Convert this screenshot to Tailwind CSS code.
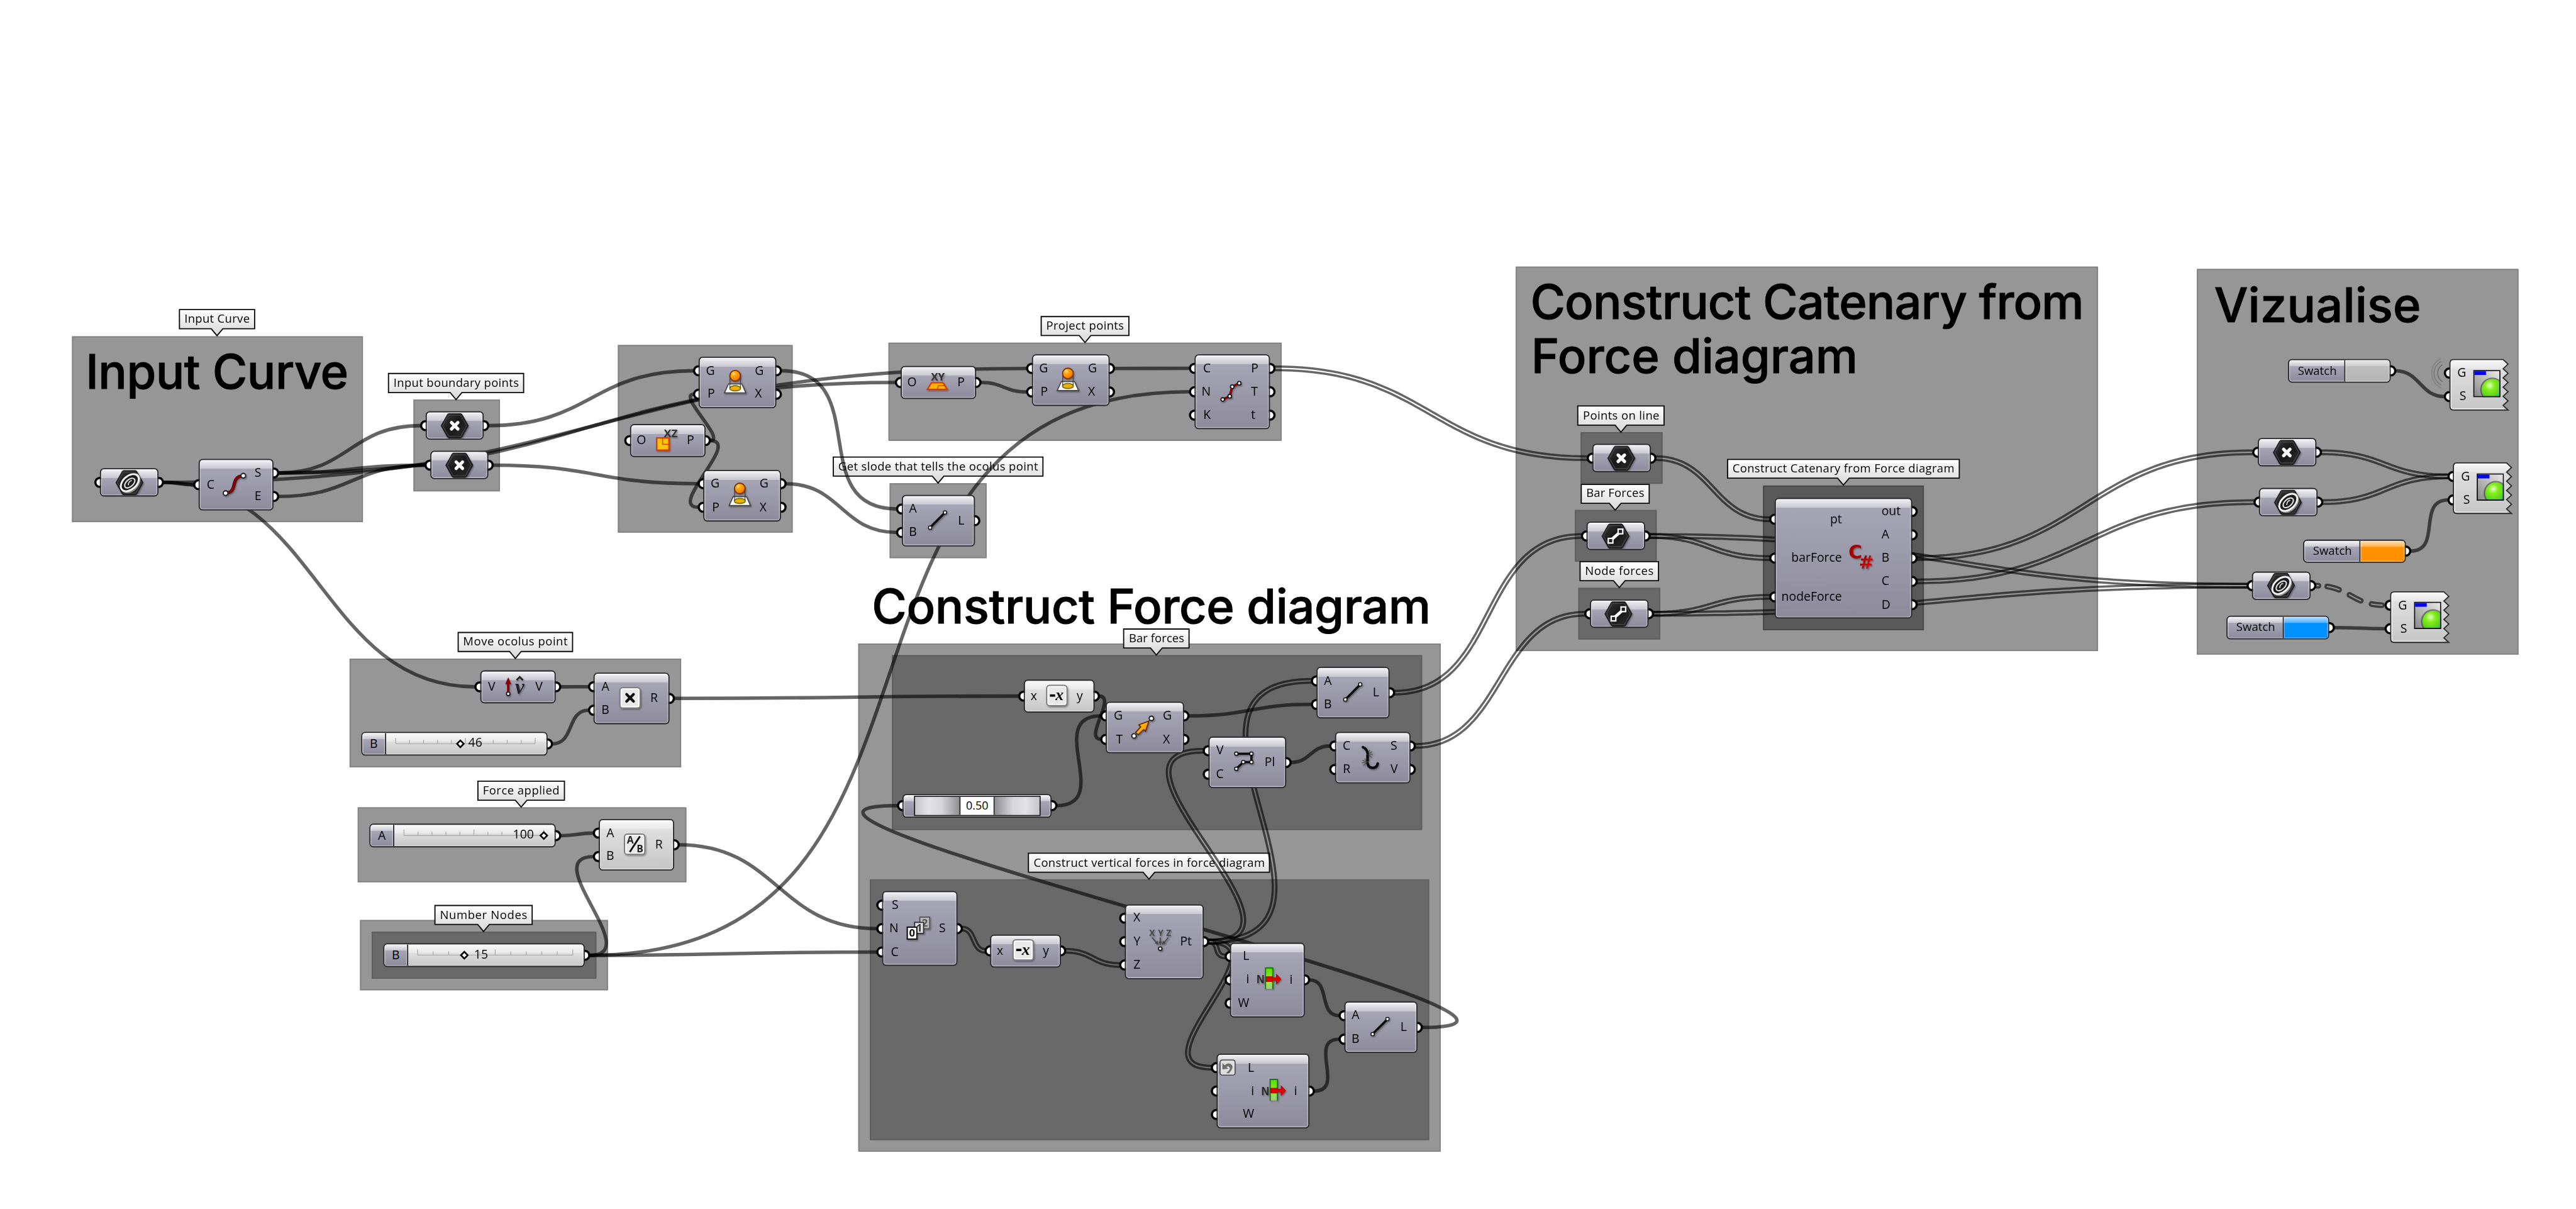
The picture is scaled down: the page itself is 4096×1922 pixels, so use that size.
<!DOCTYPE html>
<html lang="en">
<head>
<meta charset="utf-8">
<title>Catenary definition</title>
<script src="https://cdn.jsdelivr.net/npm/@tailwindcss/browser@4"></script>
</head>
<body class="bg-white overflow-hidden">
<div class="w-[4096px] h-[1922px] overflow-hidden relative bg-white">
  <main id="canvas" class="relative w-[4436px] h-[2082px] origin-top-left scale-[0.92335] font-['Open_Sans','Noto_Sans',sans-serif] text-black"></main>
</div>

<svg class="absolute w-0 h-0" width="0" height="0">
  <defs>
    <linearGradient id="gHex" x1="0" y1="0" x2="1" y2="1"><stop offset="0" stop-color="#3c3c3c"/><stop offset=".45" stop-color="#191919"/><stop offset="1" stop-color="#2b2b2b"/></linearGradient>
    <linearGradient id="gPaper" x1="0" y1="0" x2="0" y2="1"><stop offset="0" stop-color="#ffffff"/><stop offset="1" stop-color="#d6d6d6"/></linearGradient>
    <linearGradient id="gBody" x1="0" y1="0" x2="0" y2="1"><stop offset="0" stop-color="#f8f8f8"/><stop offset=".18" stop-color="#e6e6e6"/><stop offset=".19" stop-color="#dedede"/><stop offset="1" stop-color="#c6c6c6"/></linearGradient>
    <radialGradient id="gBall" cx=".36" cy=".3" r=".72"><stop offset="0" stop-color="#ffe9a0"/><stop offset=".28" stop-color="#ffa90a"/><stop offset=".7" stop-color="#ff8c00"/><stop offset="1" stop-color="#d86000"/></radialGradient>
    <radialGradient id="gSphere" cx=".38" cy=".3" r=".72"><stop offset="0" stop-color="#e6ffd0"/><stop offset=".3" stop-color="#86ee1c"/><stop offset=".7" stop-color="#5bd41c"/><stop offset=".88" stop-color="#18c48c"/><stop offset="1" stop-color="#1d7fd8"/></radialGradient>
    <linearGradient id="gFrame" x1="0" y1="1" x2="1" y2="0"><stop offset="0" stop-color="#858585"/><stop offset=".6" stop-color="#c4c4c4"/><stop offset="1" stop-color="#ececec"/></linearGradient>
    <linearGradient id="gGreen" x1="0" y1="0" x2="0" y2="1"><stop offset="0" stop-color="#5fd800"/><stop offset=".6" stop-color="#8df028"/><stop offset="1" stop-color="#b6f56e" stop-opacity=".5"/></linearGradient>
    <linearGradient id="gRed" x1="0" y1="0" x2="1" y2="1"><stop offset="0" stop-color="#7c0000"/><stop offset="1" stop-color="#f01010"/></linearGradient>
    <linearGradient id="gArrow" x1="0" y1="0" x2="1" y2="1"><stop offset="0" stop-color="#ffd000"/><stop offset="1" stop-color="#f08a00"/></linearGradient>
    <filter id="soft" x="-30%" y="-30%" width="170%" height="170%"><feDropShadow dx="1.5" dy="2" stdDeviation="1.3" flood-color="#000" flood-opacity=".35"/></filter>
  </defs>
</svg>

<script>
// ---------- icons, drawn in a 48 x 48 box ----------
const dot = (x, y, r = 3.4, s = 2) => `<circle cx="${x}" cy="${y}" r="${r}" fill="#fff" stroke="#1a1a1a" stroke-width="${s}"/>`;
const sq = (x, y) => `<rect x="${x - 2.7}" y="${y - 2.7}" width="5.4" height="5.4" rx="1.5" fill="#fff" stroke="#111" stroke-width="1.7"/>`;
const hex = inner => `<path d="M.5 24L11.5 4.5Q12.3 3 14 3H34Q35.7 3 36.5 4.5L47.5 24L36.5 43.5Q35.7 45 34 45H14Q12.3 45 11.5 43.5Z" fill="url(#gHex)" stroke="#111" stroke-width="1"/><path d="M3.5 24L13.5 6H34.5L44.5 24L34.5 42H13.5Z" fill="none" stroke="#4a4a4a" stroke-width="1.2"/>${inner}`;
const keycap = inner => `<rect x="6.5" y="5" width="35" height="35" rx="5" fill="#e9e9e9" stroke="#7c7c7c" stroke-width="2.2"/><rect x="8.7" y="7.2" width="30.6" height="30.6" rx="3" fill="none" stroke="#fff" stroke-width="1.6"/>${inner}`;
const T = (x, y, size, txt, extra = '') => `<text x="${x}" y="${y}" font-size="${size}" text-anchor="middle" ${extra}>${txt}</text>`;
const OS = `font-family="Open Sans" font-weight="700"`, LS = `font-family="Liberation Sans" font-weight="700"`;
const rings = `<g transform="translate(24.500 24) rotate(-42)" fill="none"><path d="M-18 3Q-14 15 2 14Q20 11 19 -3" stroke="#8f8f8f" stroke-width="3"/><ellipse rx="18" ry="11.5" stroke="#f4f4f4" stroke-width="3.2"/><ellipse cx="-.5" cy=".5" rx="10.5" ry="6" stroke="#dedede" stroke-width="2.3"/><path d="M-5 1.5Q0 -3.500 5 -.5" stroke="#cfcfcf" stroke-width="2"/></g>`;
const ICONS = {
  curve: hex(rings),
  point: hex(`<path d="M18.500 18.500L29.500 29.500M29.500 18.500L18.500 29.500" stroke="#fff" stroke-width="5.600" stroke-linecap="round"/>`),
  line2: hex(`<path d="M16 31L32 17" stroke="#fff" stroke-width="5"/><rect x="11.500" y="28" width="8" height="8" fill="#222" stroke="#fff" stroke-width="2.400"/><rect x="28.500" y="12" width="8" height="8" fill="#222" stroke="#fff" stroke-width="2.400"/>`),
  ends: `<path d="M8.500 38C32 36 14 10 39 8" fill="none" stroke="#2a0000" stroke-width="5.400"/><path d="M8.500 38C32 36 14 10 39 8" fill="none" stroke="#900000" stroke-width="3.600"/>${dot(8.500, 38, 4)}${dot(39, 8, 4)}`,
  project: `<path d="M12.500 26H35.500L42.500 41.500H5.500Z" fill="#fff" stroke="#4a4a4a" stroke-width="2"/><ellipse cx="24" cy="33.500" rx="9.500" ry="4.400" fill="#e8b400" stroke="#7d6900" stroke-width="1.800"/><path d="M15 14V33M33 14V33" stroke="#333" stroke-width="1.200"/><circle cx="24" cy="12" r="9.200" fill="url(#gBall)" stroke="#7a3000" stroke-width="2"/>`,
  xz: `${T(31, 17.500, 18, 'XZ', OS + ' fill="#333" textLength="24" lengthAdjust="spacingAndGlyphs"')}<rect x="7" y="19" width="21" height="21" fill="#ffc20a" stroke="#d43a00" stroke-width="2.400"/><path d="M17 19V30H28" fill="none" stroke="#d43a00" stroke-width="1.500"/>`,
  xy: `${T(25, 20.500, 18, 'XY', OS + ' fill="#333" textLength="24" lengthAdjust="spacingAndGlyphs"')}<path d="M14 24H34L41 35.500H7Z" fill="#ffb300" stroke="#d43a00" stroke-width="2.400"/><path d="M24 35L26 29H37" fill="none" stroke="#d43a00" stroke-width="1.500"/>`,
  divide: `<path d="M9.600 36.800L21.700 31.200L26 14.800L38 8.800" fill="none" stroke="#8e0000" stroke-width="4.200"/>${dot(9.600, 36.800, 3.100)}${dot(21.700, 31.200, 3.100)}${dot(26, 14.800, 3.100)}${dot(38, 8.800, 3.100)}`,
  line: `<path d="M12 35L37 10" stroke="#0c0c0c" stroke-width="4"/>${sq(11.7, 35.4)}${sq(37.3, 9.4)}`,
  unit: `<path d="M12.200 33V15" stroke="#8b0000" stroke-width="4"/><path d="M12.200 7L17.500 19H7Z" fill="#8b0000"/>${dot(12.200, 35.500, 3)}${T(32, 36, 36, 'v', 'font-family="Liberation Serif" font-weight="700" font-style="italic" fill="#222"')}<path d="M26.500 12L32 6.500L37.500 12" fill="none" stroke="#222" stroke-width="3"/>`,
  mult: keycap(`<path d="M18 16.500L30 28.500M30 16.500L18 28.500" stroke="#0a0a0a" stroke-width="4.600" stroke-linecap="round"/>`),
  div: keycap(`${T(16.500, 21.500, 17, 'A', OS + ' fill="#222"')}${T(33, 37, 17, 'B', OS + ' fill="#222"')}<path d="M33 9L15.500 36" stroke="#111" stroke-width="3"/>`),
  neg: keycap(`${T(28.500, 30.500, 28, 'x', 'font-family="Liberation Serif" font-weight="700" font-style="italic"')}<path d="M12 22.500H21" stroke="#000" stroke-width="4"/>`),
  move: `<path d="M11.500 32L20.500 22.500L17 19L34.500 12.500L28.500 30L25.500 27L16 36Z" fill="url(#gArrow)" stroke="#5a1c00" stroke-width="1.700"/>${dot(8.800, 38, 3.800)}${dot(38.800, 7.800, 3.800)}`,
  poly: `<path d="M11 8.600H37V23H23L11 34.600" fill="none" stroke="#0c0c0c" stroke-width="3.800"/>${sq(11, 8.600)}${sq(37, 8.600)}${sq(37, 23)}${sq(23, 23)}${sq(11, 34.600)}`,
  shatter: `<g stroke="#555" stroke-width="1.500"><path d="M19 17L27 13M19 17L28 18M19 17L26 23M19 17L23 10"/><path d="M18 31L10 28M18 31L9 32.500M18 31L12 37M18 31L14 25"/></g><path d="M11 5.500Q18 8 19 16" fill="none" stroke="#0a0a0a" stroke-width="4.400" stroke-linecap="round"/><path d="M19 18V30" stroke="#0a0a0a" stroke-width="4.400"/><path d="M19 33Q20 41 28 41Q35 41 36.500 33.500" fill="none" stroke="#0a0a0a" stroke-width="4.400" stroke-linecap="round"/>`,
  series: `<rect x="26" y="4" width="17" height="20" fill="#b9b9b9" stroke="#555" stroke-width="2"/>${T(34.500, 20.500, 18, '2', OS + ' fill="#555"')}<rect x="17" y="13" width="15.500" height="19" fill="#ddd" stroke="#333" stroke-width="2"/>${T(25, 29, 18, '1', OS + ' fill="#333"')}<rect x="4.400" y="21.300" width="16.500" height="20.500" fill="#fff" stroke="#111" stroke-width="2.200"/>${T(12.700, 38, 18, '0', OS + ' fill="#111"')}`,
  xyz: `${T(24, 14, 15, 'XYZ', OS + ' fill="#4a4a4a" textLength="38"')}<g stroke="#4a4a4a" stroke-width="2" fill="#4a4a4a"><path d="M10 17L18.500 27M24 17V26M38 17L29.500 27"/><path stroke="none" d="M21 30L14.500 27L19.500 22.500ZM24 31L21 24H27ZM27 30L28.500 22.500L33.500 27Z"/></g>${dot(24, 36.300, 3)}`,
  list: `${T(8.800, 30, 19, 'N', LS + ' fill="#2c2c2c"')}<rect x="17" y="3.500" width="13" height="36" fill="url(#gGreen)"/><path d="M17.300 40V3.500H29.800V40" fill="none" stroke="#0c7a10" stroke-width="2"/><path d="M18.300 18.500H29.500V20.200H36V14L44 22.700L36 31.500V25.200H29.500V27H18.300Z" fill="#e00000" stroke="#900" stroke-width=".8"/>`,
  csharp: `${T(13, 25, 32, 'C', 'font-family="DejaVu Sans" font-weight="700" fill="#a40000"')}${T(32, 42.500, 31, '#', 'font-family="DejaVu Sans" font-weight="700" fill="url(#gRed)"')}`,
  preview: `<svg x="1" y="-2" width="47" height="47" viewBox="0 0 47 47"><rect width="47" height="47" fill="url(#gFrame)"/><circle cx="33" cy="34" r="21" fill="#222" opacity=".5"/><circle cx="33" cy="34" r="18.500" fill="url(#gSphere)"/><rect x="1" y="1" width="45" height="45" fill="none" stroke="#111" stroke-width="2"/><rect x="2" y="2.200" width="20" height="6.500" fill="#0606f4"/></svg>`,
};
const icon = n => `<svg class="size-12 shrink-0 overflow-visible" viewBox="0 0 48 48"><g${n === 'preview' ? '' : ' filter="url(#soft)"'}>${ICONS[n]}</g></svg>`;

// ---------- data: canvas coordinates ----------
const groups = [
  [124, 579, 625, 899], [712, 688, 861, 846], [1064, 594, 1365, 917], [1530, 590, 2207, 759], [1532, 832, 1699, 961],
  [602, 1134, 1173, 1321], [616, 1390, 1182, 1519], [620, 1584, 1047, 1705], [1478, 1108, 2481, 1983],
  [2610, 459, 3613, 1121], [3783, 463, 4337, 1127],
  [640, 1604, 1027, 1685, 1], [1536, 1128, 2449, 1429, 1], [1498, 1514, 2461, 1963, 1],
  [2722, 744, 2863, 833, 1], [2712, 878, 2853, 967, 1], [2718, 1012, 2859, 1101, 1], [3036, 836, 3313, 1085, 2],
];
const titles = [
  ['Input Curve', 152.5, 595, 670], ['Construct Force diagram', 1506.4, 2459, 1074.3],
  ['Construct Catenary from', 2640.4, 3583.7, 550], ['Force diagram', 2642, 3194.3, 643], ['Vizualise', 3818, 4164, 554.5],
];
const balloons = [
  ['Input Curve', 308, 532, 439.5, 567], ['Input boundary points', 668.3, 642, 903, 677], ['Project points', 1792, 544.3, 1945, 579],
  ['Get slode that tells the ocolus point', 1434, 786.3, 1797, 821], ['Move ocolus point', 788, 1088, 987, 1122.7],
  ['Force applied', 822, 1344.3, 973, 1379], ['Number Nodes', 748, 1558.3, 917.4, 1593], ['Bar forces', 1934.4, 1082.3, 2049, 1117],
  ['Construct vertical forces in force diagram', 1770.4, 1468.3, 2187.5, 1503], ['Points on line', 2716.4, 698, 2867, 733],
  ['Bar Forces', 2722, 832.5, 2841, 867], ['Node forces', 2720, 966.3, 2857, 1001], ['Construct Catenary from Force diagram', 2974, 790.4, 3375, 824.6],
];
// id: [x, y, w, h, inputs, outputs, icon, left label edge, right label edge, light]
// slider: [..., 'slider', letter, letter width, track start, track length, knob, value, value x]
const N = {
  n1: [172, 806, 101, 49, [''], [''], 'curve', 0, 101],
  n2: [342.3, 790, 129, 89, ['C'], ['S', 'E'], 'ends', 27, 96],
  n3: [733, 708.3, 100, 49, [''], [''], 'point', 0, 100],
  n4: [740.6, 776.3, 100, 49, [''], [''], 'point', 0, 100],
  n5: [1203, 614, 134, 89, ['G', 'P'], ['G', 'X'], 'project', 28, 97],
  n6: [1084.6, 730, 130, 57, ['O'], ['P'], 'xz', 28, 98],
  n7: [1211, 808.5, 134, 89, ['G', 'P'], ['G', 'X'], 'project', 28, 97],
  n8: [1550.6, 630, 130, 57, ['O'], ['P'], 'xy', 28, 98],
  n9: [1776.6, 610, 134, 89, ['G', 'P'], ['G', 'X'], 'project', 28, 97],
  n10: [2057, 610, 130, 129, ['C', 'N', 'K'], ['P', 'T', 't'], 'divide', 28, 97.5],
  n11: [1552.7, 852, 126, 89, ['A', 'B'], ['L'], 'line', 26, 97],
  n12: [826.5, 1154, 130.5, 57, ['V'], ['V'], 'unit', 26.4, 95.3],
  n13: [1022.2, 1158, 130.5, 89, ['A', 'B'], ['R'], 'mult', 27, 97.7],
  n14: [1030.5, 1410, 130.5, 89, ['A', 'B'], ['R'], 'div', 27, 97.7, 1],
  n15: [1763, 1170, 121.5, 57, ['x'], ['y'], 'neg', 22.8, 91, 1],
  n16: [1904.3, 1208.3, 134.5, 89, ['G', 'T'], ['G', 'X'], 'move', 29, 98.2],
  n17: [2267, 1148, 126, 89, ['A', 'B'], ['L'], 'line', 26.4, 97],
  n18: [2080.7, 1268.3, 134, 89, ['V', 'C'], ['Pl'], 'poly', 26.5, 97],
  n19: [2298.6, 1260, 130, 89, ['C', 'R'], ['S', 'V'], 'shatter', 27, 96],
  n20: [1518.6, 1534.3, 130, 129, ['S', 'N', 'C'], ['S'], 'series', 28.6, 98.3],
  n21: [1705, 1608.5, 121.5, 57, ['x'], ['y'], 'neg', 22.5, 91],
  n22: [1936.8, 1556.6, 136, 129, ['X', 'Y', 'Z'], ['Pt'], 'xyz', 27, 95.4],
  n23: [2118.4, 1622.5, 128.2, 129, ['L', 'i', 'W'], ['i'], 'list', 33, 102.4],
  n24: [2094.7, 1814, 160, 129, ['L', 'i', 'W'], ['i'], 'list', 65, 134],
  n25: [2314.7, 1724.4, 126, 89, ['A', 'B'], ['L'], 'line', 26.4, 97],
  n26: [2742, 764.3, 101, 49, [''], [''], 'point', 0, 99],
  n27: [2732, 898.3, 101, 49, [''], [''], 'line2', 0, 99],
  n28: [2737.8, 1032.2, 101, 49, [''], [''], 'line2', 0, 99],
  n29: [3056.3, 856.6, 236.5, 208.5, ['pt', 'barForce', 'nodeForce'], ['out', 'A', 'B', 'C', 'D'], 'csharp', 115.5, 183.7],
  n31: [3888, 754.2, 101, 49, [''], [''], 'point', 0, 100],
  n32: [3890.3, 840, 101, 49, [''], [''], 'curve', 0, 100],
  n34: [3878.3, 983.8, 101, 49, [''], [''], 'curve', 0, 100],
  p1: [4218, 618, 101, 89, ['G', 'S'], [], 'preview', 29, 98],
  p2: [4224.3, 796, 101, 89, ['G', 'S'], [], 'preview', 29, 98],
  p3: [4116, 1017.8, 101, 89, ['G', 'S'], [], 'preview', 29, 98],
  s1: [622.4, 1260.3, 320.3, 41, [], [''], 'slider', 'B', 40.4, 59.3, 240.3, 170.8, '46', 185],
  s2: [636.3, 1418.3, 320.7, 41, [], [''], 'slider', 'A', 40.4, 59.7, 240.8, 240.5 + 60, '100', 248],
  s3: [660.4, 1624.3, 346.6, 41, [], [''], 'slider', 'B', 40.4, 59.3, 267, 139.6, '15', 157],
  v1: [1554.3, 1366.5, 257, 41, [''], [''], 'fader'],
  w1: [3940, 618.3, 177, 40.5, [], [''], 'swatch', 'grey', 97],
  w2: [3966.3, 928.5, 176.5, 40.5, [], [''], 'swatch', 'orange', 96.6],
  w3: [3834.3, 1060.2, 177, 40.5, [], [''], 'swatch', 'blue', 96.4],
};
// from, out index, to, in index, kind (1 item, 2 list, 3 tree), handle length
const wires = [
  ['n1', 0, 'n2', 0, 1], ['n1', 0, 'n12', 0, 1, 265], ['n1', 0, 'n9', 0, 1], ['n2', 0, 'n3', 0, 1], ['n2', 0, 'n8', 0, 1], ['n2', 0, 'n4', 0, 1], ['n2', 1, 'n4', 0, 1],
  ['n3', 0, 'n5', 0, 1], ['n4', 0, 'n7', 0, 1], ['n6', 0, 'n5', 1, 1, 30], ['n6', 0, 'n7', 1, 1, 56],
  ['n5', 0, 'n11', 0, 1], ['n7', 0, 'n11', 1, 1], ['n8', 0, 'n9', 1, 1], ['n9', 0, 'n10', 0, 1], ['s3', 0, 'n10', 1, 1, 705], ['n10', 0, 'n26', 0, 2],
  ['n12', 0, 'n13', 0, 1], ['s1', 0, 'n13', 1, 1], ['n13', 0, 'n15', 0, 1], ['s2', 0, 'n14', 0, 1], ['s3', 0, 'n14', 1, 1, 98], ['s3', 0, 'n20', 2, 1], ['n14', 0, 'n20', 1, 1],
  ['n15', 0, 'n16', 1, 1, 32], ['v1', 0, 'n16', 0, 1, 100], ['n16', 0, 'n17', 1, 1], ['n22', 0, 'n17', 0, 2, 300], ['n22', 0, 'n18', 0, 2, 212], ['n22', 0, 'n23', 0, 2, 22], ['n22', 0, 'n24', 0, 2, 140],
  ['n18', 0, 'n19', 0, 1], ['n17', 0, 'n27', 0, 2], ['n19', 0, 'n28', 0, 2], ['n20', 0, 'n21', 0, 2, 24], ['n21', 0, 'n22', 2, 2],
  ['n23', 0, 'n25', 0, 1, 38], ['n24', 0, 'n25', 1, 1, 56], ['n25', 0, 'v1', 0, 1, 395],
  ['n26', 0, 'n29', 0, 2], ['n27', 0, 'n29', 1, 2], ['n27', 0, 'n34', 0, 2], ['n28', 0, 'n29', 2, 2], ['n28', 0, 'n34', 0, 2],
  ['n29', 2, 'n31', 0, 2], ['n29', 3, 'n32', 0, 2], ['n31', 0, 'p2', 0, 2], ['n32', 0, 'p2', 0, 2], ['w2', 0, 'p2', 1, 1, 56], ['w1', 0, 'p1', 1, 1], ['n34', 0, 'p3', 0, 3], ['w3', 0, 'p3', 1, 1],
];

// ---------- geometry ----------
const portY = (n, list, i) => n[1] + 4 + (n[3] - 8) * (i + .5) / list.length;
const outP = (id, i) => { const n = N[id]; return [n[0] + n[2], portY(n, n[5], i)]; };
const inP = (id, i) => { const n = N[id]; return [n[0], portY(n, n[4], i)]; };
const f = v => v.toFixed(1);
function wire([a, ai, b, bi, kind, d]) {
  let [x0, y0] = outP(a, ai), [x3, y3] = inP(b, bi);
  x0 += 8; x3 -= 8;
  d = d ?? Math.max((x3 - x0) / 2, Math.abs(y3 - y0) * .68);
  if (kind === 1) return `<path d="M${f(x0)} ${f(y0)}C${f(x0 + d)} ${f(y0)} ${f(x3 - d)} ${f(y3)} ${f(x3)} ${f(y3)}" stroke-width="6"/>`;
  const at = (t, o) => {
    const u = 1 - t, x1 = x0 + d, x2 = x3 - d;
    const x = u*u*u*x0 + 3*u*u*t*x1 + 3*u*t*t*x2 + t*t*t*x3, y = u*u*u*y0 + 3*u*u*t*y0 + 3*u*t*t*y3 + t*t*t*y3;
    const dx = 3*u*u*(x1-x0) + 6*u*t*(x2-x1) + 3*t*t*(x3-x2), dy = 6*u*t*(y3-y0), l = Math.hypot(dx, dy) || 1;
    return f(x - dy / l * o) + ' ' + f(y + dx / l * o);
  };
  const side = (t0, t1, o) => Array.from({ length: 81 }, (_, i) => at(t0 + (t1 - t0) * i / 80, o)).join('L');
  if (kind === 2) return `<path d="M${side(0, 1, 3.1)}M${side(0, 1, -3.1)}" stroke-width="3.8"/>`;
  return [[0, .03], [.125, .295], [.48, .69], [.845, .965]].map(([s, e]) => `<path d="M${side(s, e, 3)}A3 3 0 0 0 ${at(e, -3)}L${side(e, s, -3)}A3 3 0 0 0 ${at(s, 3)}Z" stroke-width="3.8"/>`).join('');
}
const box = (x, y, w, h) => `left:${x}px;top:${y}px;width:${w}px;height:${h}px`;

// ---------- rendering ----------
const groupTone = ['bg-[#969696] border-[#828282]', 'bg-[#696969] border-[#5e5e5e]', 'bg-[#595959] border-[#474747]'];
const frame = 'absolute flex rounded-[7px] border-2 border-[#2b2b2f] overflow-hidden shadow-[inset_0_0_0_1.5px_rgba(255,255,255,0.45)]';
const tone = 'bg-[linear-gradient(to_bottom,#f6f6f8_0px,#e3e2e7_5px,#c9c8d1_15px,#a6a5b5_15px,#8d8b9b_100%)]';
const toneSmall = 'bg-[linear-gradient(to_bottom,#f6f6f8_0px,#c9c8d1_10px,#a6a5b5_11px,#8d8b9b_100%)]';
const toneLight = 'bg-[linear-gradient(to_bottom,#fafafa_0px,#e8e8e8_15px,#dfdfdf_15px,#c6c6c6_100%)]';
const swatchTone = {
  grey: 'bg-[linear-gradient(to_bottom,#e8e8e8_0px,#cfcfcf_10px,#bdbdbd_11px,#b4b4b4_100%)]',
  orange: 'bg-[linear-gradient(to_bottom,#ffe2b8_0px,#ffb650_10px,#ff9300_11px,#ff9000_100%)]',
  blue: 'bg-[linear-gradient(to_bottom,#b8dfff_0px,#55b4ff_10px,#0092ff_11px,#008fff_100%)]',
};
const column = (list, cls, w = '') => `<div class="flex flex-col h-full py-0.5 ${cls}"${w && ` style="width:${w}px"`}>${list.map(l => `<span class="flex-1 flex items-center pb-0.5">${l}</span>`).join('')}</div>`;

function node(id) {
  const n = N[id], [x, y, w, h, ins, outs, kind] = n;
  if (kind === 'slider') {
    const [, , , , , , , label, div, t0, len, knob, value, vx] = n;
    let ticks = `M${t0} 20.500H${t0 + len}`;
    for (let i = 0; i <= 10; i++) ticks += `M${(t0 + len * i / 10).toFixed(1)} 20.500V${i % 5 ? 14 : 10.5}`;
    return `<div class="${frame} ${toneLight}" style="${box(x, y, w, h)}">
      <div class="h-full flex items-center justify-center border-r-2 border-[#2b2b2f] text-[21px] leading-none ${toneSmall} shadow-[inset_0_0_0_1.5px_rgba(255,255,255,0.4)]" style="width:${div}px">${label}</div>
      <svg class="absolute -left-0.5 -top-0.5 w-full h-full overflow-visible"><path d="${ticks}" stroke="#aaa" stroke-width="1.4" fill="none"/><path d="M${knob} 14.800L${knob + 5.8} 20.600L${knob} 26.400L${knob - 5.8} 20.600Z" fill="#fff" stroke="#000" stroke-width="2.8"/></svg>
      <span class="absolute -top-0.5 text-[21px] font-medium leading-[37px]" style="left:${vx - 3}px">${value}</span></div>`;
  }
  if (kind === 'fader') return `<div class="${frame} ${toneSmall} items-center justify-center" style="${box(x, y, w, h)}">
      <div class="flex w-[218px] h-[35px] border-2 border-[#1b1b1b] items-stretch"><div class="flex-1 bg-[linear-gradient(to_right,#c4c4ca,#e2e2e6_30%,#d6d6da_60%,#8e8e94)]"></div><div class="w-[61px] border-x-2 border-[#1b1b1b] bg-white flex items-center justify-center text-[19.5px] leading-none">0.50</div><div class="flex-1 bg-[linear-gradient(to_left,#c4c4ca,#e2e2e6_30%,#d6d6da_60%,#8e8e94)]"></div></div></div>`;
  if (kind === 'swatch') return `<div class="${frame} ${toneSmall}" style="${box(x, y, w, h)}">
      <div class="h-full flex items-center justify-center border-r-2 border-[#2b2b2f] text-[20px] leading-none pb-0.5 pl-0.5" style="width:${n[8]}px"><span data-fit="67">Swatch</span></div><div class="flex-1 ${swatchTone[n[7]]} shadow-[inset_0_0_0_1.5px_rgba(255,255,255,0.35)]"></div></div>`;
  // b is the frame's border width
  const inner = b => `${ins[0] ? column(ins, 'items-end text-right', n[7] - b) : ''}
      <div class="flex items-center justify-center" style="width:${n[8] - n[7] - (ins[0] ? 0 : 2 * b)}px">${icon(kind)}</div>${outs[0] ? column(outs, 'items-start') : ''}`;
  if (kind === 'preview') {
    let z = 'M6 1H92.500';
    for (let i = 1; i <= 11; i++) z += `L${i % 2 ? 101 : 92.5} ${(1 + i * 7.91).toFixed(1)}`;
    return `<div class="absolute flex text-[21px] leading-none" style="${box(x, y, w, h)}"><svg class="absolute inset-0 w-full h-full overflow-visible"><path d="${z}H7Q1 88 1 82V7Q1 1 7 1Z" fill="url(#gBody)" stroke="#2b2b2f" stroke-width="2"/><path d="M92 3H7Q3 3 3 7V82Q3 86 7 86H94" fill="none" stroke="#fff" stroke-opacity=".7" stroke-width="1.5"/></svg><div class="relative flex w-full h-full py-0.5">${inner(0)}</div></div>`;
  }
  const extra = id === 'n24' ? `<svg class="absolute left-[3px] top-2 w-7 h-7" viewBox="0 0 28 28"><rect x="1" y="1" width="26" height="26" rx="4" fill="#dedede" stroke="#333" stroke-width="1.6"/><path d="M5 17V6L9 10Q14 5 19.500 8Q25 12 20.500 18.500L16.500 24L11.500 23.500Q19.500 18 17.500 14Q15.500 10.500 12 13L15.500 16Z" fill="#6e6e6e"/></svg>` : '';
  return `<div class="${frame} ${n[9] ? toneLight : tone} text-[21px] leading-none" style="${box(x, y, w, h)}">${inner(2)}${extra}</div>`;
}

function balloon([text, x0, y0, x1, y1]) {
  const w = x1 - x0, h = y1 - y0, m = w / 2;
  return `<div class="absolute flex items-center justify-center text-[20px] leading-none" style="${box(x0, y0, w, h)}">
    <svg class="absolute inset-0 w-full h-full overflow-visible"><path d="M1 1H${w - 1}V${h - 1}H${m + 10}L${m} ${h + 11}L${m - 10} ${h - 1}H1Z" fill="url(#gPaper)" stroke="#0a0a0a" stroke-width="2"/></svg>
    <span class="relative whitespace-nowrap pb-0.5" data-fit="${w - 19}">${text}</span></div>`;
}

let html = groups.map(([a, b, c, d, k = 0]) => `<div class="absolute border-2 ${groupTone[k]}" style="${box(a, b, c - a, d - b)}"></div>`).join('');
html += titles.map(([t, x0, x1, base]) => `<h2 class="absolute whitespace-nowrap font-['Inter'] font-medium text-[82px] leading-none [-webkit-text-stroke:1px_#000]" style="left:${x0 - 5}px;top:${base - 71}px"><span data-fit="${x1 - x0 + 10}">${t}</span></h2>`).join('');
html += balloons.map(balloon).join('');
html += `<svg class="absolute inset-0 w-full h-full" fill="none" stroke="#000" stroke-opacity=".6">${wires.map(wire).join('')}
  <g stroke="#555" stroke-width="1.5" stroke-opacity=".7"><path d="M4206 628A17 17 0 0 0 4206 657"/><path stroke-opacity=".5" d="M4204 622A23 23 0 0 0 4204 663"/><path stroke-opacity=".35" d="M4204 617A28 28 0 0 0 4204 668"/></g></svg>`;
html += `<svg class="absolute inset-0 w-full h-full" fill="#fff" stroke="#000" stroke-width="3.8">${Object.keys(N).map(id => [...N[id][4].map((_, i) => inP(id, i)), ...N[id][5].map((_, i) => outP(id, i))].map(([x, y]) => `<circle cx="${f(x)}" cy="${f(y)}" r="7.8"/>`).join('')).join('')}</svg>`;
html += Object.keys(N).map(node).join('');
const canvas = document.getElementById('canvas');
canvas.innerHTML = html;

// spread each caption over its measured width
function fit() {
  const k = canvas.getBoundingClientRect().width / canvas.offsetWidth;
  canvas.querySelectorAll('[data-fit]').forEach(e => {
    e.style.letterSpacing = '0px';
    e.style.marginRight = '0px';
    const w = e.getBoundingClientRect().width / k;
    const s = (parseFloat(e.dataset.fit) - w) / (e.textContent.length - 1);
    e.style.letterSpacing = s.toFixed(3) + 'px';
    e.style.marginRight = (-s).toFixed(3) + 'px';
  });
}
fit();
addEventListener('load', fit);
document.fonts.ready.then(fit);
new ResizeObserver(fit).observe(canvas);
requestAnimationFrame(() => requestAnimationFrame(fit));
setTimeout(fit, 60);
</script>
</body>
</html>
